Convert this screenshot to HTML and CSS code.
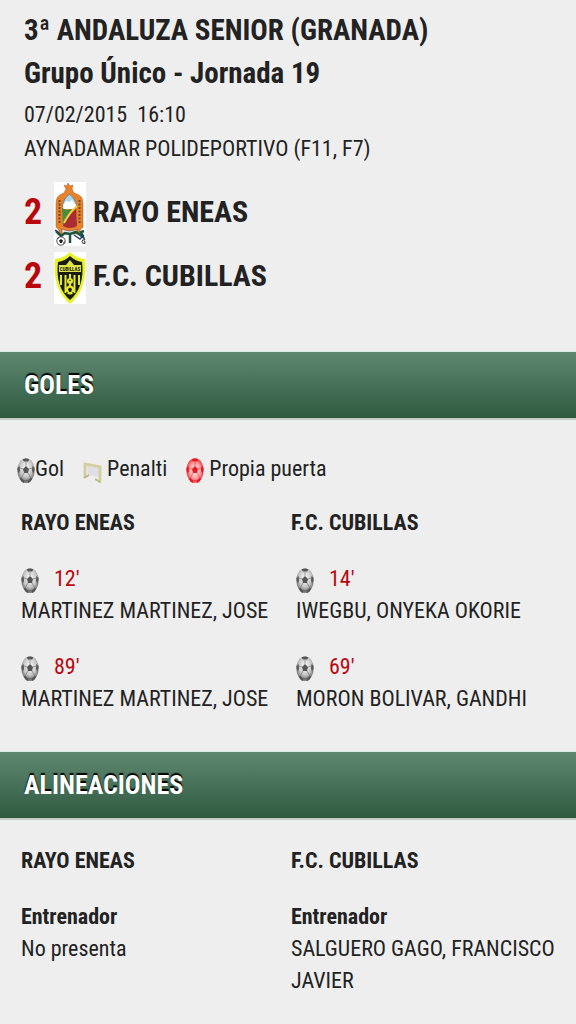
FILE: index.html
```
<!DOCTYPE html>
<html lang="es">
<head>
    <meta charset="utf-8">
    <meta name="viewport" content="width=device-width, initial-scale=1">
    <title>Rayo Eneas - F.C. Cubillas</title>
    <link rel="stylesheet" href="styles.css">
</head>
<body>
  <svg class="sprite" width="0" height="0">
    <defs>
      <radialGradient id="gris" cx="50%" cy="40%" r="62%">
        <stop offset="0" stop-color="#fff"/>
        <stop offset="0.6" stop-color="#c4c4c4"/>
        <stop offset="1" stop-color="#555"/>
      </radialGradient>
      <radialGradient id="rojo" cx="50%" cy="50%" r="55%">
        <stop offset="0" stop-color="#fff"/>
        <stop offset="0.6" stop-color="#ff9a9a"/>
        <stop offset="1" stop-color="#e81c24"/>
      </radialGradient>
      <!-- manchas del balon, toman el color del svg -->
      <g id="manchas">
        <path fill="currentColor" d="M9 8 12 11 11 15H7L6 11Z"/>
        <path fill="currentColor" d="M5.500 1.500Q9-.5 12.500 1.500L11 3.500H7ZM.5 10 2.500 8 3 12 2 16Q.2 13 .5 10ZM17.500 10 15.500 8 15 12 16 16Q17.800 13 17.500 10ZM4 19.500 7 22.500V25Q4 24 3 21ZM14 19.500 11 22.500V25Q14 24 15 21Z"/>
        <path fill="none" stroke="currentColor" stroke-width=".5" d="M9 8V4M12 11l3-1M6 11 3 10M7 15l-2.500 4.500M11 15l2.500 4.500M7 22.500h4"/>
      </g>
      <symbol id="balon" viewBox="0 0 18 25">
        <ellipse cx="9" cy="12.500" rx="8.700" ry="12.300" fill="url(#gris)"/>
        <use href="#manchas"/>
      </symbol>
      <symbol id="balon-rojo" viewBox="0 0 18 25">
        <ellipse cx="9" cy="12.500" rx="8.700" ry="12.300" fill="url(#rojo)"/>
        <use href="#manchas"/>
      </symbol>
    </defs>
  </svg>

  <div class="partido">
    <h1>3ª ANDALUZA SENIOR (GRANADA)<br>Grupo Único - Jornada 19</h1>
    <p class="lugar">07/02/2015&nbsp; 16:10<br>AYNADAMAR POLIDEPORTIVO (F11, F7)</p>
    <div class="marcador">
      <div class="equipo">
        <span class="tanteo">2</span>
        <svg class="escudo" viewBox="0 0 32 64" width="32" height="64">
          <path fill="#fff" d="M0 0h32v64H0z"/>
          <path fill="#e8812c" stroke="#a75a20" stroke-width=".5" d="M14 1l2 3 3-1-1 4 2 4q9 2 9 10v24l-3 3v4H5v-4l-3-3V21q0-8 8-10l2-4-2-4 3 1z"/>
          <path fill="#a9d9ec" stroke="#5b5a43" stroke-width=".6" d="M15.500 12Q10 16 8 24h15q-2-8-7.500-12z"/>
          <path fill="#fff" d="M9 23l3-4 3 1 3-2 4 5v4H9z"/>
          <path fill="#4c8a3e" d="M8 26l5 2 5-1-9 17z"/>
          <path fill="#a82c35" d="M22 25l1 19q-7 4-14 0 2-9 13-19z"/>
          <path fill="none" stroke="#efd43c" stroke-width="2" d="M23 24Q15 31 10 41"/>
          <path fill="none" stroke="#6d4824" stroke-width="2" stroke-dasharray="2 1.500" d="M5.500 18v24M25.500 18v24"/>
          <path fill="#eee" stroke="#6b5555" stroke-width=".6" d="M8 47q8 4 15 0v4q-8 3-15 0z"/>
          <path fill="none" stroke="#1d5541" stroke-width="2.500" d="M2 49l5 5 4-3 5 1 6-2 7 5-2-5 3-1M16 52v9"/>
          <path fill="none" stroke="#263e6c" stroke-width="1.500" d="M1 48l4 3M20 53l6 4 4-4"/>
          <circle cx="7" cy="59" r="4.200" fill="#fff" stroke="#222" stroke-width=".8"/>
          <path fill="#222" d="M7 57l2 1.500-1 2.500H6l-1-2.500zM3 57l2-1-1-1zM10 62l1-3-2 2z"/>
          <path fill="none" stroke="#333" d="M31 58q-3-1-3 1.500t3 2v-2h-1"/>
        </svg>
        <span class="nombre">RAYO ENEAS</span>
      </div>
      <div class="equipo">
        <span class="tanteo">2</span>
        <svg class="escudo" viewBox="0 0 32 52" width="32" height="52">
          <path fill="#fff" d="M0 0h32v52H0z"/>
          <path fill="#e6f22a" d="M16 0q6 6 15 7 3 30-15 45Q-2 37 1 7q9-1 15-7z"/>
          <path fill="#1b1b12" d="M16 4q5 5 12 6 3 25-12 38Q1 35 4 10q7-1 12-6z"/>
          <path fill="#dfe64a" d="M16 8l4 5H12zM5 13h22v7H5z"/>
          <text class="rotulo" x="16" y="19" text-anchor="middle">CUBILLAS</text>
          <path fill="none" stroke="#e4e934" stroke-width="2" d="M7 23v10M11.500 23v18M20.500 23v18M25 23v10M16 22v4M16 32v2"/>
          <circle cx="16" cy="29" r="3" fill="#e4e934"/>
          <circle cx="16" cy="38" r="4.500" fill="#e4e934"/>
          <path fill="#1b1b12" d="M16 35.500l2 1.500-1 3h-2l-1-3zM12 40l2 .5-1 1.500zM20 40l-2 .5 1 1.500zM16 27.500l1 1.500h-2z"/>
        </svg>
        <span class="nombre">F.C. CUBILLAS</span>
      </div>
    </div>
  </div>

  <h2>GOLES</h2>
  <div class="goles">
    <div class="leyenda">
      <span class="clave"><svg class="balon oscuro"><use href="#balon"/></svg>Gol</span>
      <span class="clave penalti">
        <svg class="porteria" viewBox="0 0 20 22">
          <path fill="#dedee8" d="M4 4l13 2v9L5 13z"/>
          <path fill="none" stroke="#d3cf9c" stroke-width="2.800" d="M2 16V2l15 3v16"/>
          <path fill="none" stroke="#bdb884" stroke-width="1.800" d="M1 16l5-3M12 17l5 3"/>
        </svg>Penalti</span>
      <span class="clave propia"><svg class="balon rojo"><use href="#balon-rojo"/></svg>Propia puerta</span>
    </div>
    <div class="columnas">
      <div class="columna">
        <h3>RAYO ENEAS</h3>
        <div class="gol">
          <div class="minuto"><svg class="balon oscuro"><use href="#balon"/></svg>12'</div>
          MARTINEZ MARTINEZ, JOSE
        </div>
        <div class="gol">
          <div class="minuto"><svg class="balon oscuro"><use href="#balon"/></svg>89'</div>
          MARTINEZ MARTINEZ, JOSE
        </div>
      </div>
      <div class="columna visitante">
        <h3>F.C. CUBILLAS</h3>
        <div class="gol">
          <div class="minuto"><svg class="balon oscuro"><use href="#balon"/></svg>14'</div>
          IWEGBU, ONYEKA OKORIE
        </div>
        <div class="gol">
          <div class="minuto"><svg class="balon oscuro"><use href="#balon"/></svg>69'</div>
          MORON BOLIVAR, GANDHI
        </div>
      </div>
    </div>
  </div>

  <h2>ALINEACIONES</h2>
  <div class="alineaciones columnas">
    <div class="columna">
      <h3>RAYO ENEAS</h3>
      <h4>Entrenador</h4>
      <p>No presenta</p>
    </div>
    <div class="columna">
      <h3>F.C. CUBILLAS</h3>
      <h4>Entrenador</h4>
      <p>SALGUERO GAGO, FRANCISCO JAVIER</p>
    </div>
  </div>
</body>
</html>
```
FILE: styles.css
```
body{
  margin: 0;
  background-color: #eee;
  color: #222;
  font-family: "Roboto Condensed", "Liberation Sans Narrow", Roboto, sans-serif;
  font-size: 22px;
  line-height: 32px;
}
h1, h2, h3, h4, p{
  margin: 0;
}
.sprite{
  position: absolute;
}

/* cabecera del partido */
.partido{
  padding: 9px 24px 43px;
}
h1{
  font-size: 29px;
  line-height: 43px;
}
.lugar{
  margin-top: 3px;
  line-height: 34px;
}
.marcador{
  margin-top: 14px;
}
.equipo{
  display: flex;
  align-items: center;
  height: 64px;
  font-size: 30px;
  font-weight: bold;
}
.tanteo{
  width: 30px;
  color: #b8080e;
  font-size: 36px;
}
.escudo{
  margin: 4px 7px 0 0;
}
.rotulo{
  font-size: 5px;
  fill: #24220f;
}

/* barras de seccion */
h2{
  padding: 0 24px;
  border-top: 1px solid #dcebe3;
  border-bottom: 2px solid #c3ccc7;
  background-image: linear-gradient(#5f8871, #2e5a40);
  color: #fff;
  font-size: 26px;
  line-height: 66px;
  text-shadow: 0 -2px 1px #000;
}

/* goles */
.goles{
  padding: 33px 0 36px;
}
.leyenda{
  display: flex;
  padding: 0 17px;
  margin-bottom: 22px;
}
.clave{
  display: flex;
  align-items: center;
}
.balon{
  width: 18px;
  height: 25px;
  margin-top: 2px;
}
.oscuro{
  color: #555;
}
.rojo{
  margin-right: 5px;
  color: #e31b23;
}
.porteria{
  width: 20px;
  height: 22px;
  margin: 8px 4px 0 0;
}
.penalti, .propia{
  margin-left: 19px;
}
.columnas{
  display: grid;
  grid-template-columns: 1fr 1fr;
  padding: 0 15px 0 21px;
}
h3{
  font-size: 22px;
  margin-bottom: 24px;
}
.gol + .gol{
  margin-top: 24px;
}
.visitante .gol{
  padding-left: 5px;
}
.minuto{
  display: flex;
  align-items: center;
  gap: 15px;
  color: #b8080e;
}

/* alineaciones */
.alineaciones{
  padding-top: 25px;
  padding-bottom: 24px;
}
h4{
  font-size: 22px;
}
```
